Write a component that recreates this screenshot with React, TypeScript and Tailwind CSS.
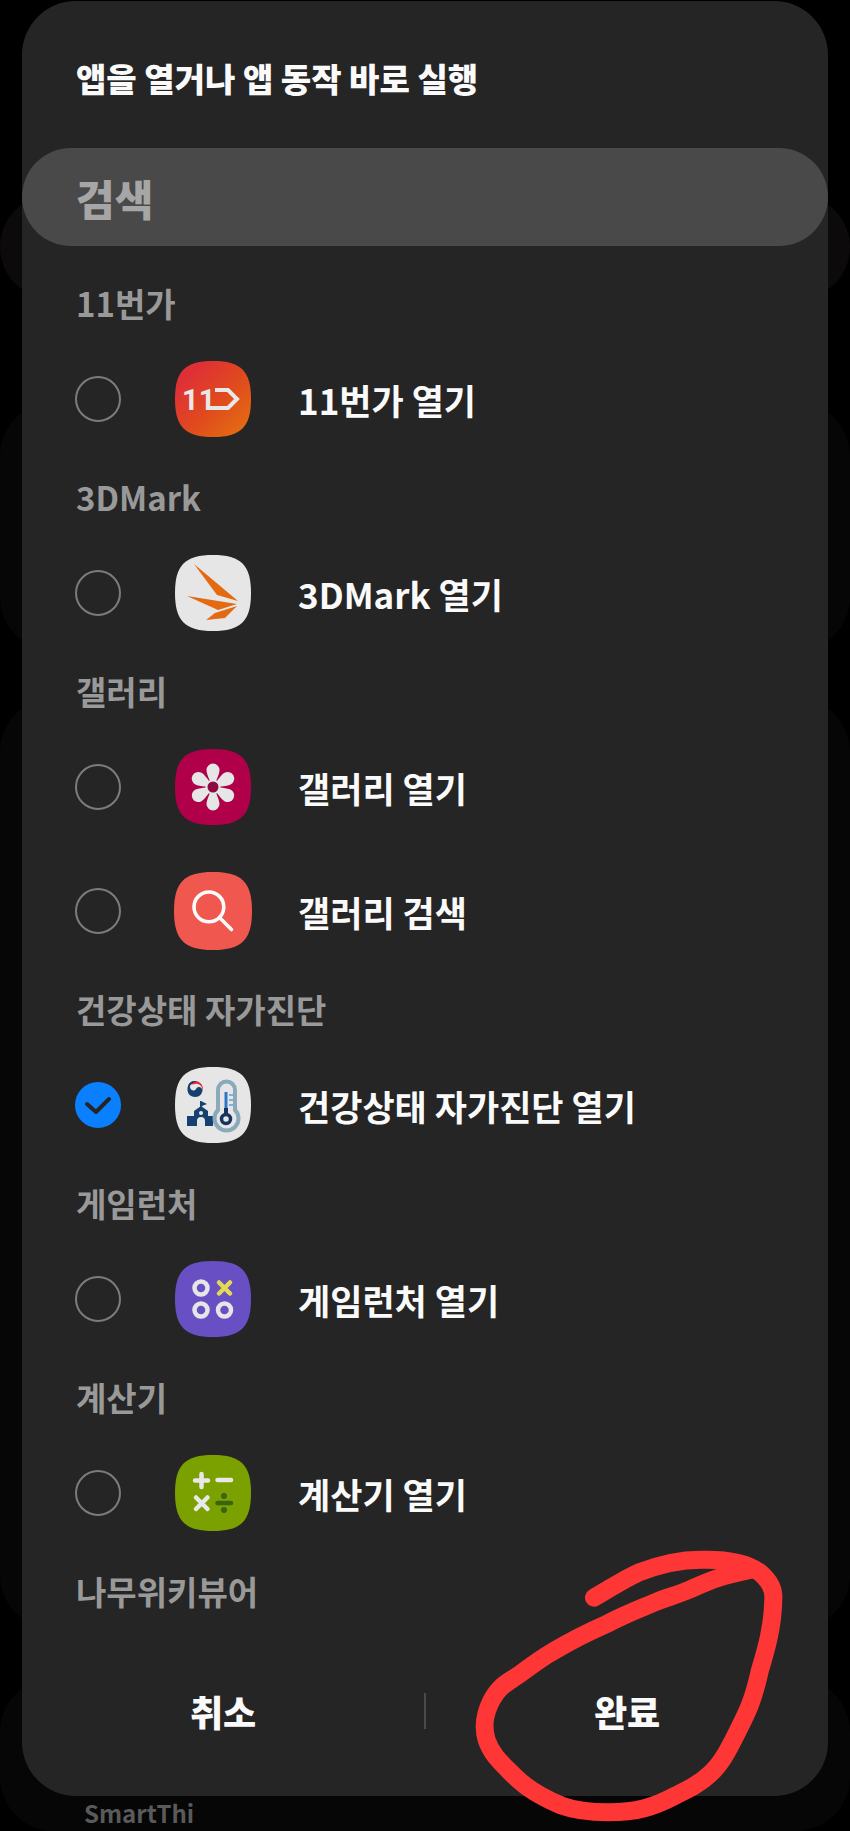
import type { ReactNode } from "react";

const SQUIRCLE =
    "M38 0C66 0 76 10 76 38S66 76 38 76 0 66 0 38 10 0 38 0Z";

type Action = {
    id: string;
    label: string;
    icon: ReactNode;
    checked?: boolean;
};

type Group = {
    title: string;
    actions: Action[];
};

function AppIcon({
    fill,
    size = "size-[76px]",
    children,
}: {
    fill: string;
    size?: string;
    children: ReactNode;
}) {
    return (
        <svg viewBox="0 0 76 76" className={size} aria-hidden="true">
            <path d={SQUIRCLE} fill={fill} />
            {children}
        </svg>
    );
}

function ElevenStreetIcon() {
    return (
        <AppIcon fill="url(#eleven)">
            <defs>
                <linearGradient id="eleven" x1="0" y1="0" x2="1" y2="1">
                    <stop offset="0.2" stopColor="#df3135" />
                    <stop offset="0.55" stopColor="#e04a1e" />
                    <stop offset="1" stopColor="#e4740f" />
                </linearGradient>
            </defs>
            <text
                x="7"
                y="49"
                fill="#e8e8e8"
                fontFamily="Roboto, sans-serif"
                fontSize="29"
                fontWeight="700"
            >
                11
            </text>
            <path
                d="M40 29H53L62 38 53 47H31"
                fill="none"
                stroke="#e8e8e8"
                strokeWidth="4"
            />
        </AppIcon>
    );
}

function MarkIcon() {
    return (
        <AppIcon fill="#e6e6e6">
            <g fill="#e46a12">
                <path d="M19 9L63 46 42 40Z" />
                <path d="M12 41L62 49 43 55Z" />
                <path d="M62 51L50 63 31 65 40 58Z" />
            </g>
        </AppIcon>
    );
}

function GalleryIcon() {
    return (
        <AppIcon fill="#b00049">
            {[0, 60, 120, 180, 240, 300].map((angle) => (
                <path
                    key={angle}
                    d="M38 37L34.500 31C33 27 31.500 24 31.500 21A6.500 6.500 0 0 1 44.500 21C44.500 24 43 27 41.500 31Z"
                    fill="#e6e6e6"
                    transform={`rotate(${angle} 38 38)`}
                />
            ))}
            <circle cx="38" cy="38" r="7.500" fill="#e6e6e6" />
            <circle cx="38" cy="38" r="5.500" fill="#8f0a42" />
        </AppIcon>
    );
}

function SearchIcon() {
    return (
        <AppIcon fill="#f0574f" size="size-[78px]">
            <g fill="none" stroke="#fcfcfc" strokeWidth="3.500" strokeLinecap="round">
                <circle cx="34" cy="34" r="14.500" />
                <path d="M44.500 44.500L56 56" />
            </g>
        </AppIcon>
    );
}

function HealthIcon() {
    return (
        <AppIcon fill="#e6e6e6">
            <path d="M13 18A8 8 0 0 1 27 26C29 21 25 16 20 17Z" fill="#e5273a" />
            <path
                d="M14 17C11 21 12 30 20 30 26 30 28 25 27 22 26 20 23 19 21 22 19 25 15 23 15 20 15 17 18 15 22 15 19 13 16 14 14 17Z"
                fill="#15406f"
            />
            <path d="M26 34L32 37 27 39V43H25V34Z" fill="#15406f" />
            <path
                d="M26 39L33 44V49H38V59H30V54A4 4 0 0 0 22 54V59H12V49H19V44Z"
                fill="#15406f"
            />
            <circle cx="26" cy="46" r="2" fill="#e6e6e6" />
            <path
                d="M43 23A8.500 8.500 0 0 1 60 23V43A12 12 0 1 1 43 43Z"
                fill="#e6e6e6"
                stroke="#8aa9bb"
                strokeWidth="4"
            />
            <path d="M51 25V46" stroke="#2a78c8" strokeWidth="3" />
            <path d="M51 41V48" stroke="#17335f" strokeWidth="4" />
            <circle cx="51" cy="52" r="4.500" fill="none" stroke="#17335f" strokeWidth="3.500" />
            <path
                d="M54 28H58M54 33H58M54 38H58"
                stroke="#5f9ed6"
                strokeWidth="1.500"
            />
        </AppIcon>
    );
}

function GameIcon() {
    return (
        <AppIcon fill="#6850c4">
            <g fill="none" strokeWidth="4.500">
                <g stroke="#e6e6e6">
                    <circle cx="26" cy="27" r="6.500" />
                    <circle cx="26" cy="49" r="6.500" />
                    <circle cx="49.500" cy="49" r="6.500" />
                </g>
                <path
                    d="M44 21.500L55 32.500M55 21.500L44 32.500"
                    stroke="#e2da55"
                    strokeLinecap="round"
                />
            </g>
        </AppIcon>
    );
}

function CalculatorIcon() {
    return (
        <AppIcon fill="#7ba100">
            <g fill="none" strokeWidth="4.500" strokeLinecap="round">
                <path
                    d="M20 25.500H33M26.500 19V32M42.500 25H56M21 42.500L32.500 54M32.500 42.500L21 54"
                    stroke="#e8e8e8"
                />
                <path d="M42.500 48H56" stroke="#3c6410" />
            </g>
            <circle cx="49" cy="41" r="3" fill="#3c6410" />
            <circle cx="49" cy="55" r="3" fill="#3c6410" />
        </AppIcon>
    );
}

const groups: Group[] = [
    {
        title: "11번가",
        actions: [{ id: "eleven-open", label: "11번가 열기", icon: <ElevenStreetIcon /> }],
    },
    {
        title: "3DMark",
        actions: [{ id: "mark-open", label: "3DMark 열기", icon: <MarkIcon /> }],
    },
    {
        title: "갤러리",
        actions: [
            { id: "gallery-open", label: "갤러리 열기", icon: <GalleryIcon /> },
            { id: "gallery-search", label: "갤러리 검색", icon: <SearchIcon /> },
        ],
    },
    {
        title: "건강상태 자가진단",
        actions: [
            {
                id: "health-open",
                label: "건강상태 자가진단 열기",
                icon: <HealthIcon />,
                checked: true,
            },
        ],
    },
    {
        title: "게임런처",
        actions: [{ id: "game-open", label: "게임런처 열기", icon: <GameIcon /> }],
    },
    {
        title: "계산기",
        actions: [{ id: "calc-open", label: "계산기 열기", icon: <CalculatorIcon /> }],
    },
    { title: "나무위키뷰어", actions: [] },
];

function ActionRow({ action }: { action: Action }) {
    return (
        <label
            htmlFor={action.id}
            className="flex h-[124px] cursor-pointer items-center pl-[53px]"
        >
            <span className="grid size-[46px] shrink-0 place-items-center">
                <input
                    id={action.id}
                    type="radio"
                    name="action"
                    defaultChecked={action.checked}
                    className="peer col-start-1 row-start-1 size-[46px] appearance-none rounded-full border-2 border-[#7c7c7c] checked:border-[#0a80ff] checked:bg-[#0a80ff]"
                />
                <svg
                    viewBox="0 0 46 46"
                    className="pointer-events-none invisible col-start-1 row-start-1 size-[46px] peer-checked:visible"
                    aria-hidden="true"
                >
                    <path
                        d="M12 22L21 30 34 17"
                        fill="none"
                        stroke="#252525"
                        strokeWidth="4"
                        strokeLinecap="round"
                        strokeLinejoin="round"
                    />
                </svg>
            </span>
            <span className="ml-[53px] grid size-[78px] shrink-0 place-items-center">
                {action.icon}
            </span>
            <span className="ml-[46px] pt-0.5 text-[35px] leading-10 text-[#fafafa]">
                {action.label}
            </span>
        </label>
    );
}

// Dimmed cards of the screen that sits behind the sheet
function Backdrop() {
    return (
        <div className="absolute inset-0 flex flex-col overflow-hidden pt-[195px]">
            <div className="h-[104px] shrink-0 rounded-full bg-[#0c0a0b]"></div>
            <div className="mt-[103px] h-[249px] shrink-0 rounded-[54px] bg-[#060606]"></div>
            <div className="mt-[47px] h-[931px] shrink-0 rounded-[54px] bg-[#060606]"></div>
            <div className="mt-[49px] flex h-[153px] shrink-0 items-end rounded-[54px] bg-[#060606] pl-[84px]">
                <span className="text-2xl leading-9 text-[#5a5a5a]">SmartThi</span>
            </div>
        </div>
    );
}

function Scribble() {
    return (
        <svg
            viewBox="0 0 1290 933"
            className="pointer-events-none absolute right-0 bottom-0 w-[430px]"
            aria-hidden="true"
        >
            <path
                d="M522 233C570 206 610 178 655 158 720 132 790 118 850 119 930 118 990 134 1020 158 1048 182 1062 205 1060 235 1059 320 1038 390 1020 450 1000 540 985 570 955 630 925 690 905 730 870 762 840 790 810 805 770 825 700 862 650 877 565 877 500 877 460 870 425 857 360 830 320 805 285 770 245 730 215 705 200 660 188 620 192 585 215 540 240 495 260 490 300 462 350 425 370 410 400 394 470 352 510 334 560 312 610 285 650 270 700 249 740 232 770 226 810 208 870 182 900 168 990 150"
                fill="none"
                stroke="#ff3636"
                strokeWidth="54"
                strokeLinecap="round"
                strokeLinejoin="round"
            />
        </svg>
    );
}

function App() {
    return (
        <div className="relative bg-black pt-px pb-[35px] font-['Noto_Sans_CJK_KR',sans-serif] font-bold">
            <Backdrop />
            <main className="relative mx-[22px] rounded-[54px] bg-[#252525]">
                <h1 className="px-[54px] pt-[53px] pb-[46px] text-[33px] leading-12 font-black text-[#fafafa]">
                    앱을 열거나 앱 동작 바로 실행
                </h1>
                <input
                    type="search"
                    aria-label="검색"
                    placeholder="검색"
                    className="block h-[98px] w-full appearance-none rounded-full bg-[#494949] px-[54px] text-[42px] font-black text-[#fafafa] placeholder:text-[#a6a6a6]"
                />
                <div className="pt-[21px]">
                    {groups.map((group) => (
                        <section key={group.title}>
                            <h2 className="flex h-[70px] items-center pt-0.5 pl-[54px] text-[33px] leading-10 text-[#999999]">
                                {group.title}
                            </h2>
                            {group.actions.map((action) => (
                                <ActionRow key={action.id} action={action} />
                            ))}
                        </section>
                    ))}
                </div>
                <div className="flex h-[171px] items-center text-[36px] font-black text-[#fafafa]">
                    <button type="button" className="h-24 flex-1 cursor-pointer">
                        취소
                    </button>
                    <div className="h-9 w-0.5 bg-[#4a4a4a]"></div>
                    <button type="button" className="h-24 flex-1 cursor-pointer">
                        완료
                    </button>
                </div>
            </main>
            <Scribble />
        </div>
    );
}

export default App;
